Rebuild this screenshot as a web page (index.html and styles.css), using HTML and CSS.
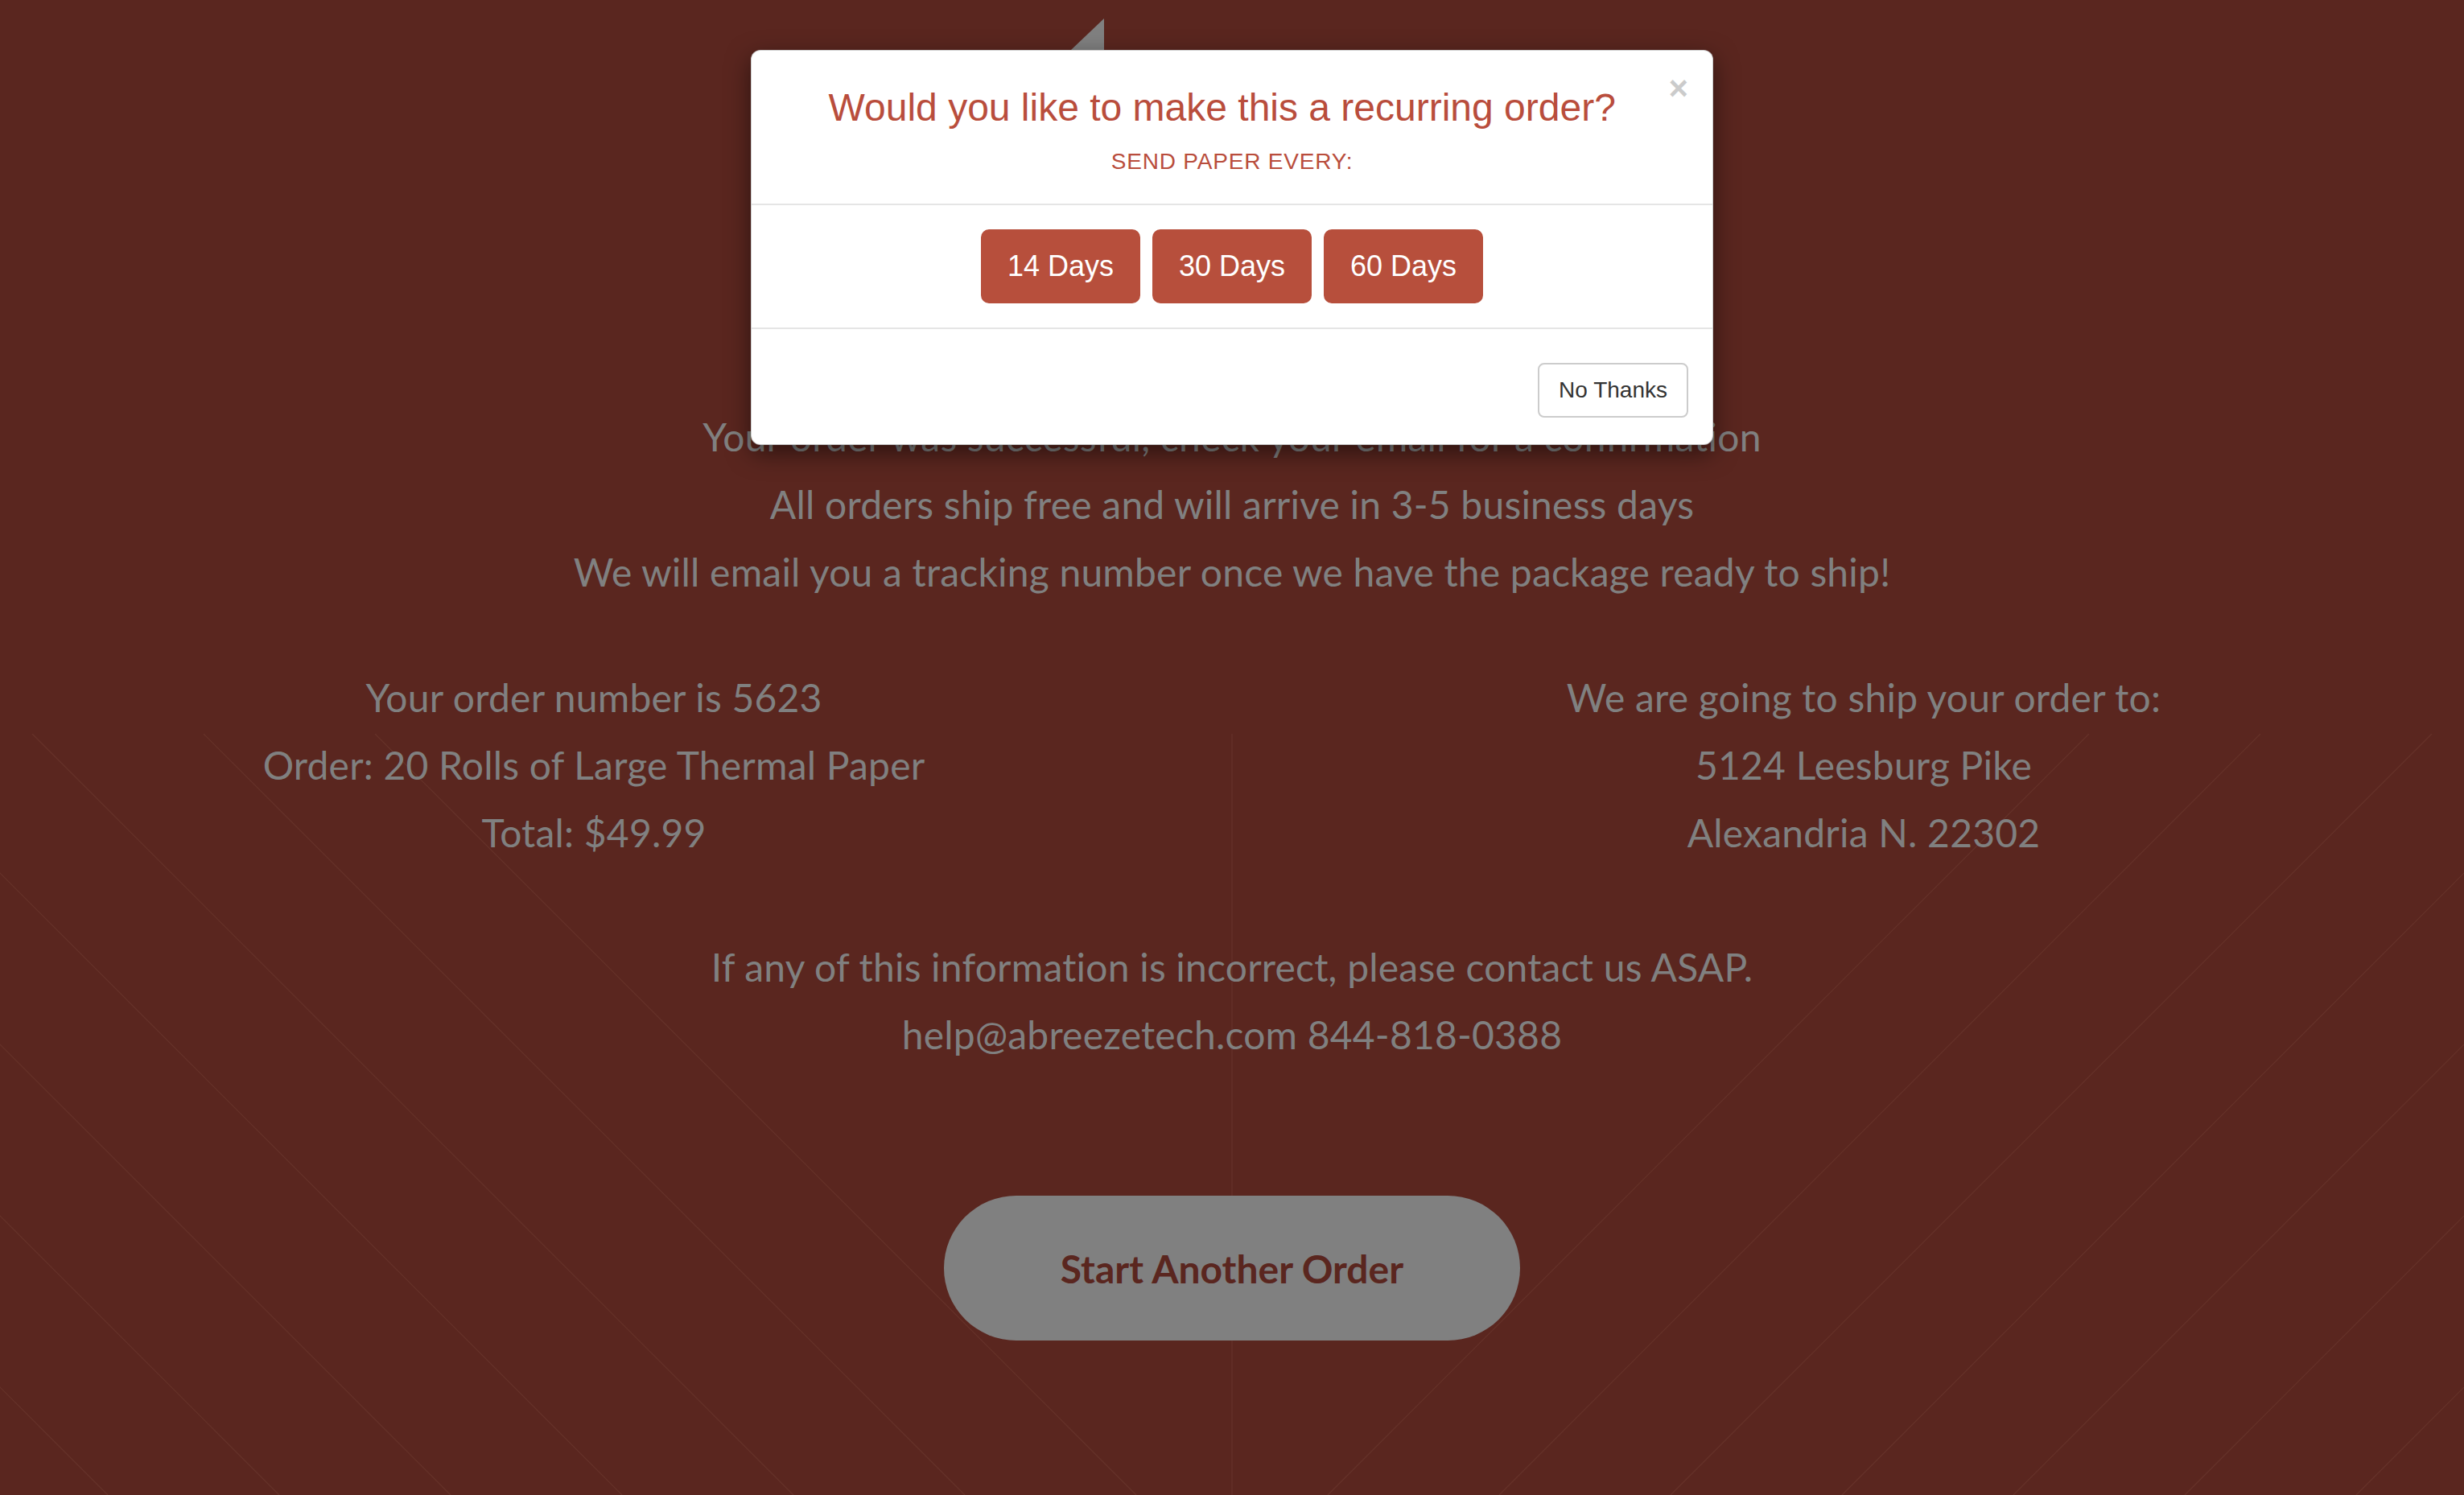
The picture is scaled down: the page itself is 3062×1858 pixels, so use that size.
FILE: index.html
```html
<!DOCTYPE html>
<html lang="en">
<head>
  <meta charset="UTF-8">
  <meta name="viewport" content="width=device-width, initial-scale=1.0">
  <title>Order Complete</title>
  <link rel="stylesheet" href="styles.css">
</head>
<body>
  <!-- Decorative line pattern behind the lower half of the page -->
  <svg class="pattern" width="3062" height="946" viewBox="0 0 3062 946" aria-hidden="true">
    <g stroke="#66332a" stroke-width="1.2" fill="none">
      <line x1="1531" y1="0" x2="1531" y2="946"/>
      <line x1="-812" y1="0" x2="134" y2="946"/>
      <line x1="-599" y1="0" x2="347" y2="946"/>
      <line x1="-386" y1="0" x2="560" y2="946"/>
      <line x1="-173" y1="0" x2="773" y2="946"/>
      <line x1="40" y1="0" x2="986" y2="946"/>
      <line x1="253" y1="0" x2="1199" y2="946"/>
      <line x1="466" y1="0" x2="1412" y2="946"/>
      <line x1="3874" y1="0" x2="2928" y2="946"/>
      <line x1="3661" y1="0" x2="2715" y2="946"/>
      <line x1="3448" y1="0" x2="2502" y2="946"/>
      <line x1="3235" y1="0" x2="2289" y2="946"/>
      <line x1="3022" y1="0" x2="2076" y2="946"/>
      <line x1="2809" y1="0" x2="1863" y2="946"/>
      <line x1="2596" y1="0" x2="1650" y2="946"/>
    </g>
  </svg>

  <main class="page">
    <div class="brand">
      <svg class="logo" width="400" height="120" viewBox="0 0 400 120" aria-hidden="true">
        <polygon points="0,39 41,0 41,120 0,120" fill="#808080"/>
      </svg>
    </div>

    <section class="status">
      <p>Your order was successful, check your email for a confirmation</p>
      <p>All orders ship free and will arrive in 3-5 business days</p>
      <p>We will email you a tracking number once we have the package ready to ship!</p>
    </section>

    <section class="details">
      <div class="details-col">
        <p>Your order number is 5623</p>
        <p>Order: 20 Rolls of Large Thermal Paper</p>
        <p>Total: $49.99</p>
      </div>
      <div class="details-col">
        <p>We are going to ship your order to:</p>
        <p>5124 Leesburg Pike</p>
        <p>Alexandria N. 22302</p>
      </div>
    </section>

    <section class="contact">
      <p>If any of this information is incorrect, please contact us ASAP.</p>
      <p>help@abreezetech.com 844-818-0388</p>
    </section>

    <div class="actions">
      <button class="restart-button">Start Another Order</button>
    </div>
  </main>

  <!-- Recurring order modal -->
  <div class="modal">
    <div class="modal-header">
      <button class="close" aria-label="Close">&times;</button>
      <h3 class="modal-title">Would you like to make this a recurring order?</h3>
      <p class="modal-subtitle">SEND PAPER EVERY:</p>
    </div>
    <div class="modal-body">
      <button class="btn btn-interval">14 Days</button>
      <button class="btn btn-interval">30 Days</button>
      <button class="btn btn-interval">60 Days</button>
    </div>
    <div class="modal-footer">
      <button class="btn btn-default">No Thanks</button>
    </div>
  </div>
</body>
</html>
```

FILE: styles.css
```css
/* Global Styles */
body {
  background-color: #5a261f;
  color: #808080;
  font-family: Lato, "Liberation Sans", sans-serif;
  margin: 0;
  padding: 0;
  position: relative;
  min-height: 1858px;
  overflow: hidden;
}

p {
  margin: 0;
}

/* Background pattern */
.pattern {
  position: absolute;
  top: 912px;
  left: 0;
  z-index: 0;
}

/* Page Content */
.page {
  position: relative;
  z-index: 1;
  padding-top: 23px;
  text-align: center;
  font-size: 48px;
  letter-spacing: 0.2px;
  line-height: 84px;
}

.brand {
  height: 478px;
  display: flex;
  justify-content: center;
}

.logo {
  display: block;
}

.details {
  display: grid;
  grid-template-columns: 1fr 1fr;
  column-gap: 102px;
  padding-right: 8px;
  margin-top: 72px;
}

.contact {
  margin-top: 83px;
}

.actions {
  display: flex;
  justify-content: center;
  margin-top: 158px;
}

.restart-button {
  background-color: #808080;
  border: none;
  border-radius: 90px;
  color: #5a261f;
  cursor: pointer;
  font-family: Lato, "Liberation Sans", sans-serif;
  font-size: 48px;
  font-weight: 700;
  letter-spacing: 0;
  height: 180px;
  width: 716px;
}

/* Modal Styles */
.modal {
  position: absolute;
  top: 62px;
  left: 50%;
  z-index: 10;
  box-sizing: border-box;
  width: 1196px;
  margin-left: -598px;
  background-color: #fff;
  border: 1px solid rgba(0, 0, 0, 0.2);
  border-radius: 12px;
  box-shadow: 0 10px 30px rgba(0, 0, 0, 0.5);
  font-family: "Liberation Sans", Arial, sans-serif;
  text-align: center;
}

.modal-header {
  padding: 30px;
  border-bottom: 2px solid #e5e5e5;
}

.close {
  float: right;
  background: none;
  border: none;
  color: #000;
  cursor: pointer;
  font-family: "Liberation Sans", Arial, sans-serif;
  font-size: 42px;
  font-weight: 700;
  line-height: 1;
  margin-top: -4px;
  opacity: 0.2;
  padding: 0;
}

.modal-title {
  color: #b94d3c;
  font-size: 48px;
  font-weight: 400;
  line-height: 52px;
  margin: 15px 0 0;
}

.modal-subtitle {
  color: #b94d3c;
  font-size: 28px;
  letter-spacing: 0.8px;
  line-height: 31px;
  margin: 25px 0 7px;
}

.modal-body {
  display: flex;
  justify-content: center;
  gap: 15px;
  padding: 30px;
}

.modal-footer {
  border-top: 2px solid #e5e5e5;
  padding: 42px 30px 33px;
  text-align: right;
}

.btn {
  cursor: pointer;
  font-family: "Liberation Sans", Arial, sans-serif;
}

.btn-interval {
  background-color: #b74f3c;
  border: 2px solid #b74f3c;
  border-radius: 10px;
  color: #fff;
  font-size: 36px;
  line-height: 48px;
  padding: 20px 31px;
}

.btn-default {
  background-color: #fff;
  border: 2px solid #ccc;
  border-radius: 8px;
  color: #333;
  font-size: 28px;
  line-height: 40px;
  padding: 12px 24px;
}
```
